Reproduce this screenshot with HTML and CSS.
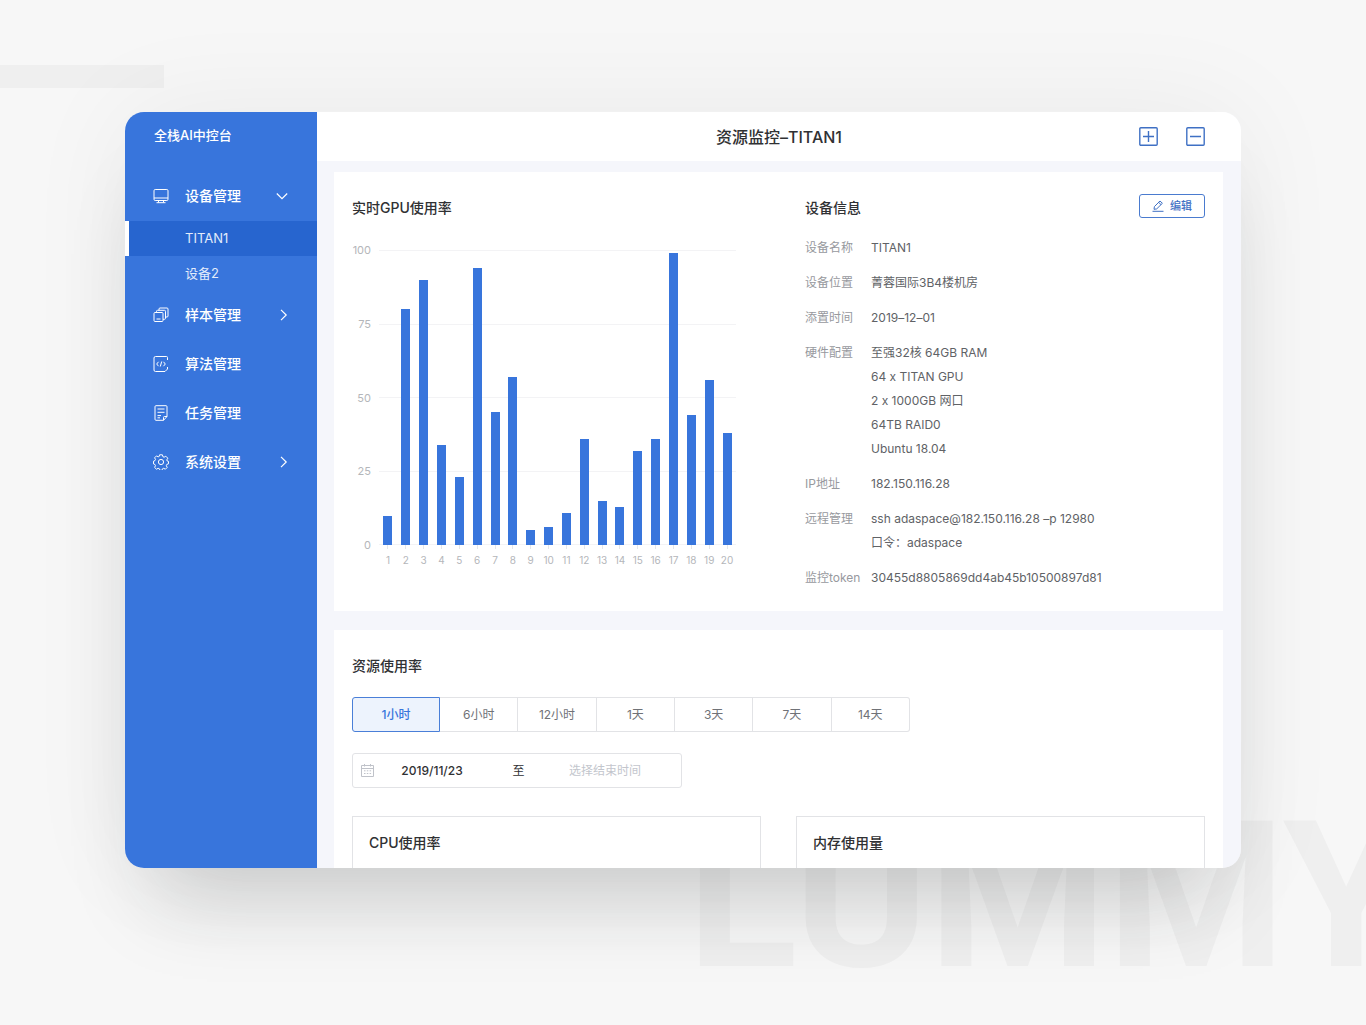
FILE: index.html
```html
<!DOCTYPE html>
<html lang="zh-CN">
<head>
<meta charset="utf-8">
<meta name="viewport" content="width=device-width, initial-scale=1">
<title>资源监控–TITAN1</title>
<link rel="stylesheet" href="styles.css">
</head>
<body>
<div class="stage">
  <div class="stripe" aria-hidden="true"></div>
  <div class="watermark" aria-hidden="true">LUMMY</div>

  <div class="window">
    <aside class="sidebar">
      <div class="brand">全栈AI中控台</div>
      <nav class="menu">
        <a class="menu-item" href="#devices">
          <svg class="menu-icon" viewBox="0 0 16 16"><rect x="1" y="1.5" width="14" height="11" rx="1.2"/><path d="M1 10h14M5.500 12.500v2M10.500 12.500v2M3.500 14.700h9"/></svg>
          <span class="menu-label">设备管理</span>
          <svg class="chevron" viewBox="0 0 14 14"><path d="M1.800 4.500 7 9.700l5.200-5.200"/></svg>
        </a>
        <a class="submenu-item active" href="#titan1">TITAN1</a>
        <a class="submenu-item" href="#device2">设备2</a>
        <a class="menu-item" href="#samples">
          <svg class="menu-icon" viewBox="0 0 16 16"><rect x="1" y="5.500" width="9" height="9" rx="1"/><path d="M3.500 12h4M3.500 5.500V4.300a1 1 0 0 1 1-1h7a1 1 0 0 1 1 1v7a1 1 0 0 1-1 1H10M6 3.300V2a1 1 0 0 1 1-1h7a1 1 0 0 1 1 1v7a1 1 0 0 1-1 1h-1.500"/></svg>
          <span class="menu-label">样本管理</span>
          <svg class="chevron" viewBox="0 0 14 14"><path d="M6 1.800 11.200 7 6 12.200"/></svg>
        </a>
        <a class="menu-item" href="#algorithms">
          <svg class="menu-icon" viewBox="0 0 16 16"><path d="M14.500 4V1.500a1 1 0 0 0-1-1h-11a1.500 1.500 0 0 0-1.500 1.500v12a1.500 1.500 0 0 0 1.500 1.500H12l2.500-2.500v-2M5.500 5.800 3.700 8l1.800 2.200M10.500 5.800 12.300 8l-1.800 2.200M8.700 5.500l-1.400 5"/></svg>
          <span class="menu-label">算法管理</span>
        </a>
        <a class="menu-item" href="#tasks">
          <svg class="menu-icon" viewBox="0 0 16 16"><path d="M14 11.500V1.700a1 1 0 0 0-1-1H3a1 1 0 0 0-1 1v12.600a1 1 0 0 0 1 1h7.500zM10.500 15.300v-2.800a1 1 0 0 1 1-1H14M4.500 4h7M4.500 7.300h7M4.500 10.600h3.500M4.500 12.800h2.500"/></svg>
          <span class="menu-label">任务管理</span>
        </a>
        <a class="menu-item" href="#settings">
          <svg class="menu-icon" viewBox="0 0 16 16"><path d="M6.600.8h2.800l.5 1.900 1.200.5 1.700-1 2 2-1 1.700.4 1.100 1.300.4v2.400l-1.700.6-.5 1.300.9 1.700-1.800 1.800-1.700-.9-1.200.5-.6 1.600H7.100l-.7-1.600-1.300-.5-1.600.9-1.900-1.800.9-1.700-.5-1.200-1.500-.6V7.200L2 6.600l.5-1.200-.9-1.600 1.900-1.900 1.700.9 1-.4z"/><circle cx="8" cy="8" r="2.600"/></svg>
          <span class="menu-label">系统设置</span>
          <svg class="chevron" viewBox="0 0 14 14"><path d="M6 1.800 11.200 7 6 12.200"/></svg>
        </a>
      </nav>
    </aside>

    <main class="main">
      <header class="topbar">
        <h1 class="page-title">资源监控–TITAN1</h1>
        <div class="topbar-actions">
          <button class="icon-button" type="button" aria-label="添加"><svg viewBox="0 0 19 19"><rect x=".8" y=".8" width="17.400" height="17.400" rx="1"/><path d="M4 9.500h11M9.500 4v11"/></svg></button>
          <button class="icon-button" type="button" aria-label="移除"><svg viewBox="0 0 19 19"><rect x=".8" y=".8" width="17.400" height="17.400" rx="1"/><path d="M4 9.500h11"/></svg></button>
        </div>
      </header>

      <div class="content">
        <section class="card overview">
          <div class="gpu">
            <h2 class="section-title">实时GPU使用率</h2>
            <div class="chart">
              <div class="y-axis"><span>100</span><span>75</span><span>50</span><span>25</span><span>0</span></div>
              <div class="plot">
                <div class="gridlines"><i></i><i></i><i></i><i></i><i></i></div>
                <div class="bars">
                  <i style="height:10%"></i><i style="height:80%"></i><i style="height:90%"></i><i style="height:34%"></i><i style="height:23%"></i>
                  <i style="height:94%"></i><i style="height:45%"></i><i style="height:57%"></i><i style="height:5%"></i><i style="height:6%"></i>
                  <i style="height:11%"></i><i style="height:36%"></i><i style="height:15%"></i><i style="height:13%"></i><i style="height:32%"></i>
                  <i style="height:36%"></i><i style="height:99%"></i><i style="height:44%"></i><i style="height:56%"></i><i style="height:38%"></i>
                </div>
              </div>
              <div class="x-axis">
                <span>1</span><span>2</span><span>3</span><span>4</span><span>5</span><span>6</span><span>7</span><span>8</span><span>9</span><span>10</span><span>11</span><span>12</span><span>13</span><span>14</span><span>15</span><span>16</span><span>17</span><span>18</span><span>19</span><span>20</span>
              </div>
            </div>
          </div>

          <div class="device">
            <div class="device-head">
              <h2 class="section-title">设备信息</h2>
              <button class="edit-button" type="button">
                <svg viewBox="0 0 12 12"><path d="M.5 11.300h11M2 9.300l.4-2.700L8 1l2.400 2.300-5.700 5.600zM6.700 2.400l2.300 2.200"/></svg>编辑
              </button>
            </div>
            <dl class="info">
              <dt>设备名称</dt><dd>TITAN1</dd>
              <dt>设备位置</dt><dd>菁蓉国际3B4楼机房</dd>
              <dt>添置时间</dt><dd>2019–12–01</dd>
              <dt>硬件配置</dt><dd>至强32核 64GB RAM<br>64 x TITAN GPU<br>2 x 1000GB 网口<br>64TB RAID0<br>Ubuntu 18.04</dd>
              <dt>IP地址</dt><dd>182.150.116.28</dd>
              <dt>远程管理</dt><dd>ssh adaspace@182.150.116.28 –p 12980<br>口令：adaspace</dd>
              <dt>监控token</dt><dd>30455d8805869dd4ab45b10500897d81</dd>
            </dl>
          </div>
        </section>

        <section class="card usage">
          <h2 class="section-title">资源使用率</h2>
          <div class="range">
            <button class="range-button selected" type="button">1小时</button>
            <button class="range-button" type="button">6小时</button>
            <button class="range-button" type="button">12小时</button>
            <button class="range-button" type="button">1天</button>
            <button class="range-button" type="button">3天</button>
            <button class="range-button" type="button">7天</button>
            <button class="range-button" type="button">14天</button>
          </div>
          <div class="date-range">
            <svg class="calendar" viewBox="0 0 13 13"><path d="M.5 1.500h12v11H.5zM.5 4.500h12M3.500 0v2.500M9.500 0v2.500M3 6.800h1.500M5.800 6.800h1.500M8.600 6.800h1.500M3 9.500h1.500M5.800 9.500h1.500M8.600 9.500h1.500"/></svg>
            <input class="date-input" type="text" value="2019/11/23" aria-label="开始时间">
            <span class="date-separator">至</span>
            <input class="date-input" type="text" placeholder="选择结束时间" aria-label="结束时间">
          </div>
          <div class="panels">
            <section class="panel"><h3 class="section-title">CPU使用率</h3></section>
            <section class="panel"><h3 class="section-title">内存使用量</h3></section>
          </div>
        </section>
      </div>
    </main>
  </div>
</div>
</body>
</html>
```
FILE: styles.css
```css
* {
  box-sizing: border-box;
}

body {
  margin: 0;
  background: #f7f7f7;
  color: #303133;
  font: 12px/24px Inter, "Noto Sans CJK SC", sans-serif;
  font-variant-ligatures: no-contextual;
}

h1, h2, h3, dl, dd {
  margin: 0;
}

i {
  font-style: normal;
}

a {
  color: inherit;
  text-decoration: none;
}

svg {
  display: block;
  fill: none;
  stroke: currentColor;
}

button, input {
  font: inherit;
}

button {
  cursor: pointer;
}

/* Backdrop */
.stage {
  position: relative;
  height: 100vh;
  min-height: 600px;
  padding: 112px 125px 157px;
  overflow: hidden;
}

.stripe {
  position: absolute;
  top: 65px;
  left: 0;
  width: 12%;
  height: 23px;
  background: #efefef;
}

.watermark {
  position: absolute;
  left: 50%;
  bottom: 30px;
  padding-left: 4px;
  color: #efefef;
  font: 700 204px/196px Roboto, sans-serif;
}

.window {
  position: relative;
  display: flex;
  height: 100%;
  border-radius: 19px;
  box-shadow: 0 60px 80px -30px rgba(30, 32, 36, 0.18), 0 0 110px rgba(30, 32, 36, 0.06);
}

/* Sidebar */
.sidebar {
  flex: 0 0 192px;
  border-radius: 19px 0 0 19px;
  background: #3875dc;
  color: #fff;
}

.brand {
  margin-bottom: 14px;
  padding-left: 29px;
  font-size: 13px;
  font-weight: 500;
  line-height: 46px;
}

.menu-item {
  display: flex;
  align-items: center;
  height: 49px;
  padding: 0 28px 1px;
  font-size: 14px;
  font-weight: 500;
}

.menu-icon {
  width: 16px;
  height: 16px;
  margin-right: 16px;
  stroke-width: 1;
}

.menu-label {
  flex: 1;
}

.chevron {
  width: 14px;
  height: 14px;
  stroke-width: 1.2;
}

.submenu-item {
  display: block;
  border-left: 4px solid transparent;
  padding-left: 56px;
  color: #e3ecfb;
  font-size: 13px;
  line-height: 35px;
}

.submenu-item.active {
  border-color: #fff;
  background: #2765cf;
}

/* Main column */
.main {
  display: flex;
  flex: 1;
  flex-direction: column;
  min-width: 0;
  border-radius: 0 19px 19px 0;
  background: #f5f6fb;
  overflow: hidden;
}

.topbar {
  display: grid;
  grid-template-columns: 1fr auto 1fr;
  align-items: center;
  flex: 0 0 49px;
  padding: 0 36px;
  background: #fff;
}

.page-title {
  grid-column: 2;
  font-size: 16px;
  font-weight: 500;
}

.topbar-actions {
  display: flex;
  justify-content: flex-end;
  gap: 28px;
}

.icon-button {
  width: 19px;
  height: 19px;
  border: 0;
  padding: 0;
  background: none;
  color: #3f70c4;
  stroke-width: 1.4;
}

.content {
  display: flex;
  flex: 1;
  flex-direction: column;
  gap: 19px;
  min-height: 0;
  padding: 11px 18px 19px 17px;
  overflow-y: auto;
  scrollbar-width: none;
}

.card {
  flex: none;
  padding: 22px 18px 21px;
  background: #fff;
}

.section-title {
  font-size: 14px;
  font-weight: 500;
  line-height: 28px;
}

.overview {
  display: grid;
  grid-template-columns: 1fr 400px;
}

/* GPU chart */
.chart {
  display: grid;
  grid-template-columns: 19px 1fr;
  grid-template-rows: 295px auto;
  column-gap: 8px;
  max-width: 384px;
  margin-top: 28px;
  color: #b4b6ba;
  font-size: 11px;
  line-height: 16px;
}

.y-axis {
  display: flex;
  flex-direction: column;
  justify-content: space-between;
  margin: -8px 0;
  text-align: right;
}

.plot {
  display: grid;
}

.gridlines, .bars {
  grid-area: 1 / 1;
}

.gridlines {
  display: flex;
  flex-direction: column;
  justify-content: space-between;
}

.gridlines i {
  height: 1px;
  background: #f3f3f5;
}

.bars, .x-axis {
  display: grid;
  grid-template-columns: repeat(20, 1fr);
}

.bars {
  align-items: end;
  justify-items: center;
}

.bars i {
  width: 9px;
  background: #3875dc;
}

.x-axis {
  grid-column: 2;
  font-size: 10px;
  text-align: center;
}

.x-axis span::before {
  display: block;
  width: 1px;
  height: 4px;
  margin: 0 auto 3px;
  background: #e4e6ea;
  content: "";
}

/* Device details */
.device-head {
  display: flex;
  align-items: flex-start;
  justify-content: space-between;
}

.edit-button {
  display: flex;
  align-items: center;
  justify-content: center;
  gap: 6px;
  width: 66px;
  height: 24px;
  border: 1px solid #4a7bcf;
  border-radius: 3px;
  padding: 0;
  background: #fff;
  color: #3f70c4;
  font-size: 11px;
  font-weight: 500;
}

.edit-button svg {
  width: 12px;
  height: 12px;
}

.info {
  display: grid;
  grid-template-columns: 66px 1fr;
  row-gap: 11px;
  margin-top: 14px;
}

.info dt {
  color: #97999e;
}

.info dd {
  color: #606266;
}

/* Usage */
.range {
  display: flex;
  max-width: 558px;
  margin-top: 17px;
}

.range-button {
  flex: 1;
  height: 35px;
  border: 1px solid #e2e3e6;
  border-left: 0;
  padding: 0;
  background: #fff;
  color: #707277;
}

.range-button.selected {
  flex: 0 0 88px;
  border: 1px solid #4a7fd8;
  border-radius: 3px 0 0 3px;
  background: #edf3fd;
  color: #3875dc;
  font-weight: 500;
}

.range-button:last-child {
  border-radius: 0 3px 3px 0;
}

.date-range {
  display: flex;
  align-items: center;
  max-width: 330px;
  height: 35px;
  margin-top: 21px;
  border: 1px solid #e2e3e6;
  border-radius: 3px;
  padding: 0 28px 0 8px;
}

.calendar {
  flex: none;
  width: 13px;
  height: 13px;
  margin-right: 10px;
  color: #bfc2c9;
}

.date-input {
  flex: 1;
  min-width: 0;
  border: 0;
  padding: 0;
  background: none;
  color: #303133;
  font-weight: 500;
  text-align: center;
}

.date-input::placeholder {
  color: #c3c6cd;
  font-weight: 400;
}

.date-separator {
  flex: 0 0 77px;
  text-align: center;
}

.panels {
  display: grid;
  grid-template-columns: 1fr 1fr;
  gap: 35px;
  margin-top: 28px;
}

.panel {
  min-height: 260px;
  border: 1px solid #e2e3e6;
  padding: 12px 16px;
}
```
